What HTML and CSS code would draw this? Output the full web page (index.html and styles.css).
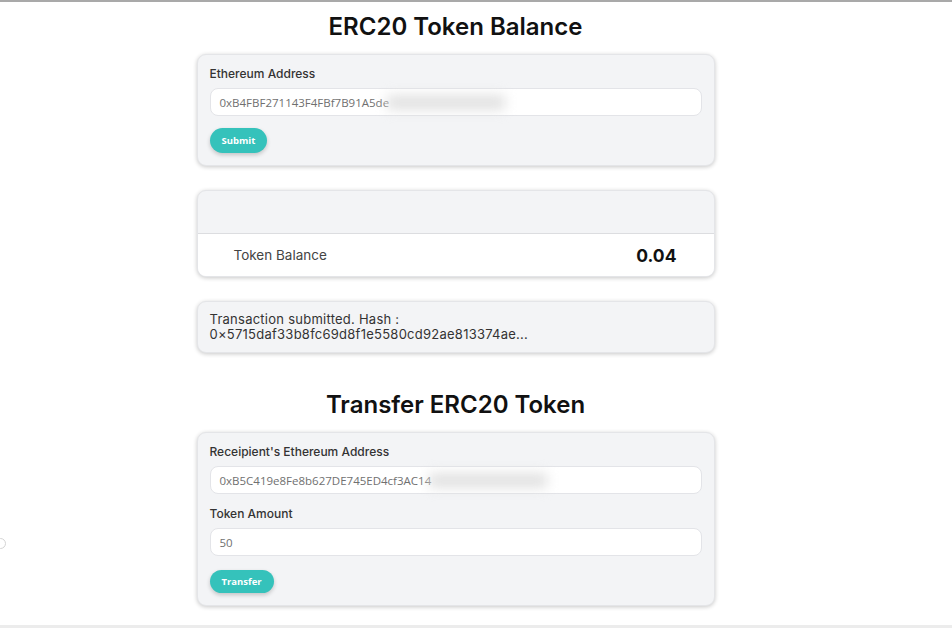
FILE: index.html
```html
<!DOCTYPE html>
<html>
<head>
<meta charset="utf-8">
<link rel="stylesheet" href="styles.css">
</head>
<body>
<div class="page">
  <main class="col">
    <h1 class="title">ERC20 Token Balance</h1>
    <section class="card form">
      <label class="label">Ethereum Address</label>
      <div class="input"><span>0xB4FBF271143F4FBf7B91A5de</span><span class="blur"></span></div>
      <button class="btn">Submit</button>
    </section>
    <section class="card balance">
      <div class="bal-head"></div>
      <div class="bal-row"><span class="bal-label">Token Balance</span><span class="bal-value">0.04</span></div>
    </section>
    <section class="card tx">
      <p class="tx-line">Transaction submitted. Hash :</p>
      <p class="tx-line">0×5715daf33b8fc69d8f1e5580cd92ae813374ae...</p>
    </section>
    <h1 class="title title2">Transfer ERC20 Token</h1>
    <section class="card form">
      <label class="label">Receipient's Ethereum Address</label>
      <div class="input"><span>0xB5C419e8Fe8b627DE745ED4cf3AC14</span><span class="blur"></span></div>
      <label class="label label2">Token Amount</label>
      <div class="input"><span>50</span></div>
      <button class="btn btn-transfer">Transfer</button>
    </section>
  </main>
  <span class="dot"></span>
</div>
</body>
</html>
```
FILE: styles.css
```css
html, body {
  margin: 0;
  padding: 0;
  background: #fff;
}
body {
  font-family: Inter, "Liberation Sans", sans-serif;
  color: #222;
}
.page {
  position: relative;
  border-top: 2px solid #a9a9a9;
  border-bottom: 3px solid #ececec;
  box-sizing: border-box;
  height: 628px;
  display: flex;
  justify-content: center;
  padding-right: 41px;
  overflow: hidden;
}
.col {
  width: 518px;
  display: flex;
  flex-direction: column;
}
.title {
  margin: 10px 0 12px;
  font-size: 24px;
  line-height: 30px;
  font-weight: 600;
  text-align: center;
  color: #111;
}
.title2 {
  margin: 37px 0 12px;
}
.card {
  background: #f3f4f6;
  border-radius: 9px;
  box-shadow: 0 1px 4px rgba(0,0,0,0.22);
  border: 1px solid #e4e5e8;
  box-sizing: border-box;
}
.form {
  padding: 11px 12px 12px;
  display: flex;
  flex-direction: column;
  align-items: flex-start;
}
.label {
  font-size: 12px;
  line-height: 16px;
  font-weight: 500;
  color: #333;
}
.label2 {
  margin-top: 12px;
}
.input {
  margin-top: 6px;
  align-self: stretch;
  height: 28px;
  background: #fff;
  border: 1px solid #e3e4e8;
  border-radius: 8px;
  box-sizing: border-box;
  display: flex;
  align-items: center;
  padding-left: 9px;
  font-family: "Open Sans", "Liberation Sans", sans-serif;
  font-size: 11.5px;
  color: #707070;
}
.blur {
  display: inline-block;
  width: 118px;
  height: 15px;
  background: #e2e2e2;
  filter: blur(6px);
  margin-left: -2px;
}
.btn {
  margin-top: 12px;
  height: 25px;
  padding: 0 12px;
  border: none;
  border-radius: 13px;
  background: #35c2bb;
  color: #fff;
  font-family: "Open Sans", "Liberation Sans", sans-serif;
  font-weight: 700;
  font-size: 9.5px;
  box-shadow: 0 2px 4px rgba(0,0,0,0.2);
}
.btn-transfer {
  margin-top: 14px;
  height: 23px;
}
.balance {
  margin-top: 24px;
  overflow: hidden;
}
.bal-head {
  height: 42px;
  border-bottom: 1px solid #dcdde0;
}
.bal-row {
  background: #fff;
  height: 42px;
  display: flex;
  align-items: center;
  justify-content: space-between;
  padding: 0 37px 0 36px;
}
.bal-label {
  font-size: 13.5px;
  color: #444;
}
.bal-value {
  font-size: 17.5px;
  font-weight: 700;
  color: #111;
}
.tx {
  margin-top: 24px;
  padding: 10px 12px 10px;
}
.tx-line {
  margin: 0;
  font-size: 13px;
  letter-spacing: 0.25px;
  line-height: 15px;
  height: 15px;
  color: #333;
}
.dot {
  position: absolute;
  left: -5px;
  top: 536px;
  width: 9px;
  height: 9px;
  border: 1.5px solid #d4d4d4;
  border-radius: 50%;
}
```
